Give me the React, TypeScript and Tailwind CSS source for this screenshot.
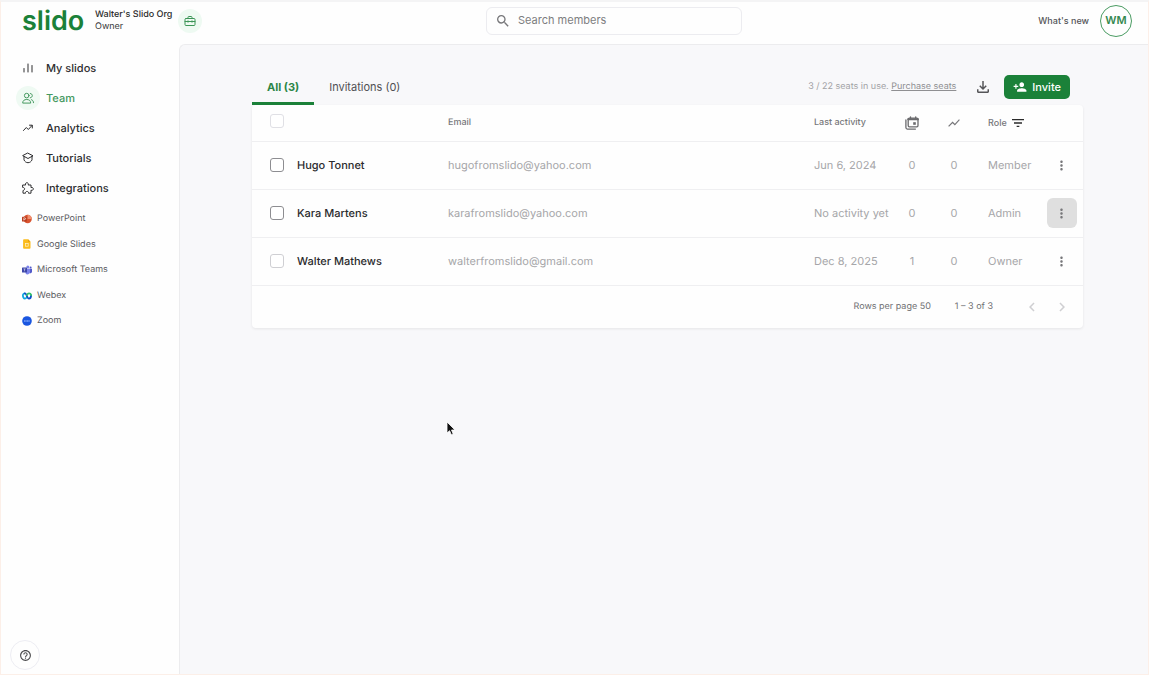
import type { ReactNode } from 'react'
import {
  MdChevronLeft,
  MdChevronRight,
  MdFilterList,
  MdHelpOutline,
  MdMoreVert,
  MdOutlineFileDownload,
  MdPersonAdd,
  MdSearch,
  MdShowChart,
} from 'react-icons/md'

interface Member {
  name: string
  email: string
  lastActivity: string
  slidos: number
  joined: number
  role: string
  menuOpen?: boolean
  locked?: boolean
}

const members: Member[] = [
  { name: 'Hugo Tonnet', email: 'hugofromslido@yahoo.com', lastActivity: 'Jun 6, 2024', slidos: 0, joined: 0, role: 'Member' },
  { name: 'Kara Martens', email: 'karafromslido@yahoo.com', lastActivity: 'No activity yet', slidos: 0, joined: 0, role: 'Admin', menuOpen: true },
  { name: 'Walter Mathews', email: 'walterfromslido@gmail.com', lastActivity: 'Dec 8, 2025', slidos: 1, joined: 0, role: 'Owner', locked: true },
]

const line = {
  fill: 'none',
  stroke: 'currentColor',
  strokeLinecap: 'round',
  strokeLinejoin: 'round',
} as const

const navItems: { label: string; icon: ReactNode; active?: boolean }[] = [
  {
    label: 'My slidos',
    icon: (
      <svg className="w-3 h-3" viewBox="0 0 12 12" {...line} strokeWidth="1">
        <path d="M2 6.500V10" />
        <path d="M6 2v8" />
        <path d="M10 3.500V10" />
      </svg>
    ),
  },
  {
    label: 'Team',
    active: true,
    icon: (
      <svg className="w-3 h-3" viewBox="0 0 12 12" {...line} strokeWidth="1">
        <circle cx="4.7" cy="3.6" r="2.3" />
        <path d="M.7 10.7c0-2 1.500-3.200 4-3.200s4 1.200 4 3.200z" />
        <path d="M8.300 1.500c2.800.2 2.800 4 0 4.300M9.500 7.700c1.300.4 2 1.500 2 3" />
      </svg>
    ),
  },
  {
    label: 'Analytics',
    icon: (
      <svg className="w-3 h-3" viewBox="0 0 12 12" {...line} strokeWidth="1">
        <path d="M1.500 8.500l2.800-3 2 2L10 3.500" />
        <path d="M7.500 3.200h2.800V6" />
      </svg>
    ),
  },
  {
    label: 'Tutorials',
    icon: (
      <svg className="w-3 h-3" viewBox="0 0 12 12" {...line} strokeWidth="1">
        <path d="M6 1.200l5 2.600-5 2.700-5-2.700z" />
        <path d="M2 4.500v3.300C2.600 9.500 4.200 10.700 6 10.700s3.400-1.200 4-2.900V4.500" />
      </svg>
    ),
  },
  {
    label: 'Integrations',
    icon: (
      <svg className="w-3 h-3" viewBox="0 0 12 12" {...line} strokeWidth="1">
        <path d="M1 3h2.600c-.5-1.300.2-2.300 1.300-2.300S6.700 1.700 6.200 3H9v2.600c1.300-.5 2.300.2 2.300 1.300S10.300 8.700 9 8.200v3H6.500c.2-1-.5-1.800-1.500-1.800s-1.700.8-1.500 1.800H1V8.500c1-.1 1.600-.8 1.600-1.600S2 5.500 1 5.400z" />
      </svg>
    ),
  },
]

const integrations: { label: string; icon: ReactNode }[] = [
  {
    label: 'PowerPoint',
    icon: (
      <svg className="w-[10px] h-[10px]" viewBox="0 0 10 10">
        <circle cx="5.600" cy="5" r="4.200" fill="#d9532f" />
        <path d="M5.600.8A4.200 4.200 0 0 1 9.800 5H5.600z" fill="#f0906f" />
        <rect x="0" y="2.700" width="4.800" height="4.800" rx=".6" fill="#b83b1d" />
        <path d="M1.800 6.500V3.800h.9a.8.8 0 0 1 0 1.700h-.9" fill="none" stroke="#fff" strokeWidth=".6" />
      </svg>
    ),
  },
  {
    label: 'Google Slides',
    icon: (
      <svg className="w-[10px] h-[10px]" viewBox="0 0 10 10">
        <path d="M2 .3h4L8.500 2.800v6a.9.9 0 0 1-.9.9H2a.9.9 0 0 1-.9-.9V1.200A.9.9 0 0 1 2 .3z" fill="#fbbc1c" />
        <path d="M6 .3l2.500 2.500H6z" fill="#e99f0c" />
        <rect x="3.400" y="4.600" width="2.800" height="2.600" fill="none" stroke="#fff3cf" strokeWidth=".7" />
      </svg>
    ),
  },
  {
    label: 'Microsoft Teams',
    icon: (
      <svg className="w-[10px] h-[10px]" viewBox="0 0 10 10">
        <circle cx="5.800" cy="1.900" r="1.500" fill="#7b83eb" />
        <circle cx="8.600" cy="2.400" r="1" fill="#5059c9" />
        <path d="M7.500 3.800H10v2.900a1.600 1.600 0 0 1-2.500 1.200z" fill="#5059c9" />
        <path d="M3.500 3.800h4.600v3a2.500 2.500 0 0 1-4.600 1.400z" fill="#7b83eb" />
        <rect x="0" y="2.500" width="5" height="5" rx=".6" fill="#3d46a8" />
        <path d="M1.400 3.900h2.200M2.500 3.900v2.400" stroke="#fff" strokeWidth=".5" />
      </svg>
    ),
  },
  {
    label: 'Webex',
    icon: (
      <svg className="w-[10px] h-[10px]" viewBox="0 0 10 10" fill="none" strokeWidth="1.800" strokeLinecap="round">
        <path d="M4.900 5.800C4.400 7.200 3.700 7.600 3 7.600 1.500 7.600.9 5.800.9 4.300.9 3 1.900 2.400 2.900 2.400" stroke="#12a8e0" />
        <path d="M2.900 2.400c2 0 2 5.200 4 5.200 1.500 0 2.200-1.800 2.200-3.300" stroke="#0b50c8" />
        <path d="M5 4.200c.5-1.200 1.100-1.800 2-1.800 1.100 0 1.900.7 2.100 1.600" stroke="#35c26b" />
      </svg>
    ),
  },
  {
    label: 'Zoom',
    icon: (
      <svg className="w-[10px] h-[10px]" viewBox="0 0 10 10">
        <circle cx="5" cy="5" r="4.800" fill="#1a56e0" />
        <path d="M2 5h6" stroke="#a9c6ff" strokeWidth="1.100" strokeDasharray="1.200 .3" />
      </svg>
    ),
  },
]

function CalendarStack() {
  return (
    <svg className="w-[14px] h-[14px]" viewBox="0 0 14 14" {...line} strokeWidth="1.300">
      <path d="M.9 4v7.600c0 .9.600 1.500 1.500 1.500h8" />
      <rect x="3.200" y="2.200" width="9.800" height="8.600" rx="1.200" />
      <path d="M3.200 3.200h9.800" strokeWidth="2" />
      <path d="M5.500.8v1.400M10.700.8v1.400" />
      <rect x="8.200" y="6.200" width="2.600" height="2.600" fill="currentColor" stroke="none" />
    </svg>
  )
}

function Header() {
  return (
    <header className="flex items-center h-[42px] shrink-0 pr-4 pb-[5px]">
      <div className="flex items-center w-[485px] shrink-0 pl-[21px]">
        <a href="#" className="w-[73px] text-[27px] leading-8 font-semibold text-[#1b8139]">slido</a>
        <div className="text-[9px] leading-3 text-[#3c3c3c]">
          <div className="font-medium text-[#2b2b2b]">Walter's Slido Org</div>
          <div>Owner</div>
        </div>
        <button aria-label="Organization" className="ml-[6px] w-6 h-6 rounded-full bg-[#eefaf2] text-[#3c9657] flex items-center justify-center">
          <svg className="w-3 h-3" viewBox="0 0 12 12" {...line} strokeWidth="1">
            <rect x="1" y="3.500" width="10" height="7" rx="1" />
            <path d="M4 3.500V2.200c0-.4.300-.7.700-.7h2.600c.4 0 .7.300.7.700v1.300M1 6.500h10M4 5.800v1.400M8 5.800v1.400" />
          </svg>
        </button>
      </div>
      <label className="flex items-center gap-[7px] w-[256px] h-7 px-2 rounded-md border border-[#ececf0] text-[#77777a]">
        <MdSearch className="w-4 h-4 shrink-0" />
        <input type="search" aria-label="Search members" placeholder="Search members" className="w-full min-w-0 text-[11px] outline-none placeholder:text-[#7d7d80]" />
      </label>
      <button className="ml-auto text-[9px] font-medium text-[#555558]">What's new</button>
      <button className="ml-[11px] w-8 h-8 rounded-full border border-[#4b9c63] text-[#34884f] text-[11px] font-semibold">WM</button>
    </header>
  )
}

function Sidebar() {
  return (
    <aside className="w-[178px] shrink-0 flex flex-col pl-[15px] pt-[9px] pb-1">
      <nav>
        <ul>
          {navItems.map((item) => (
            <li key={item.label}>
              <a href="#" className={`flex items-center gap-[6px] h-[30px] text-[11px] font-medium ${item.active ? 'text-[#459960]' : 'text-[#2d2d2f]'}`}>
                <span className={`w-6 h-6 rounded-full flex items-center justify-center ${item.active ? 'bg-[#effaf3]' : ''}`}>{item.icon}</span>
                {item.label}
              </a>
            </li>
          ))}
        </ul>
        <ul className="grid h-32 mt-[3px] pl-[6px]">
          {integrations.map((item) => (
            <li key={item.label} className="flex items-center">
              <a href="#" className="flex items-center gap-[5px] text-[9px] text-[#5b5b5e]">
                {item.icon}
                {item.label}
              </a>
            </li>
          ))}
        </ul>
      </nav>
      <button aria-label="Help" className="mt-auto -ml-[6px] w-[30px] h-[30px] rounded-full border border-[#ededf3] text-[#4a4a4c] flex items-center justify-center">
        <MdHelpOutline className="w-[13px] h-[13px]" />
      </button>
    </aside>
  )
}

function Checkbox({ label, tone }: { label: string; tone: string }) {
  return <input type="checkbox" aria-label={label} className={`appearance-none block w-[14px] h-[14px] rounded-[3px] border bg-white ${tone}`} />
}

function MembersTable() {
  return (
    <div className="bg-[#fefefe] rounded-sm shadow-[0_1px_3px_rgba(0,0,0,0.08)]">
      <table className="w-full table-fixed text-left text-[11px] text-[#a6a6a9]">
        <colgroup>
          <col className="w-[45px]" />
          <col className="w-[151px]" />
          <col />
          <col className="w-[77px]" />
          <col className="w-[42px]" />
          <col className="w-[42px]" />
          <col className="w-[65px]" />
          <col className="w-[43px]" />
        </colgroup>
        <thead>
          <tr className="h-9 border-b border-[#efeff1] text-[9px] text-[#77777a]">
            <th className="pl-[18px] pb-1"><Checkbox label="Select all members" tone="border-[#e0e0e5]" /></th>
            <th />
            <th className="font-medium">Email</th>
            <th className="font-medium">Last activity</th>
            <th><span className="flex justify-center text-[#6a6a6d]"><CalendarStack /></span></th>
            <th><MdShowChart className="w-[14px] h-[14px] mx-auto" /></th>
            <th className="font-medium pl-[13px]">
              <button className="flex items-center gap-[3px]">
                Role <MdFilterList className="w-4 h-4 text-[#2b2b2b]" />
              </button>
            </th>
            <th />
          </tr>
        </thead>
        <tbody>
          {members.map((m) => (
            <tr key={m.email} className="h-12 border-b border-[#efeff1]">
              <td className="pl-[18px]"><Checkbox label={`Select ${m.name}`} tone={m.locked ? 'border-[#cfcfd3]' : 'border-[#8d8d91]'} /></td>
              <td className="font-medium text-[#2b2b2d]">{m.name}</td>
              <td>{m.email}</td>
              <td className="whitespace-nowrap">{m.lastActivity}</td>
              <td className="text-center">{m.slidos}</td>
              <td className="text-center">{m.joined}</td>
              <td className="pl-[13px]">{m.role}</td>
              <td>
                <button aria-label={`Actions for ${m.name}`} className={`mx-auto w-[30px] h-[30px] rounded-md flex items-center justify-center text-[#77777a] ${m.menuOpen ? 'bg-[#dfdfdf]' : ''}`}>
                  <MdMoreVert className="w-[15px] h-[15px]" />
                </button>
              </td>
            </tr>
          ))}
        </tbody>
      </table>
      <div className="flex items-center justify-end h-[42px] pr-3 text-[9px] text-[#707073]">
        <span>Rows per page 50</span>
        <span className="ml-6 mr-[30px]">1 – 3 of 3</span>
        <button aria-label="Previous page" disabled className="text-[#cfcfd2]"><MdChevronLeft className="w-[18px] h-[18px]" /></button>
        <button aria-label="Next page" disabled className="ml-3 text-[#cfcfd2]"><MdChevronRight className="w-[18px] h-[18px]" /></button>
      </div>
    </div>
  )
}

export default function App() {
  return (
    <div className="flex flex-col min-h-screen bg-[#fefefe] border border-t-2 border-t-[#f4f4f5] border-[#fcefe8] font-['Inter','Liberation_Sans',sans-serif] [text-rendering:geometricPrecision]">
      <Header />
      <div className="flex flex-1">
        <Sidebar />
        <main className="flex-1 min-w-0 bg-[#f8f8fa] border-l border-t border-[#ececee] rounded-tl-md pl-[72px] pr-[65px] pt-6">
          <div className="flex items-stretch h-9 text-[11px]">
            <button className="px-[15px] pt-1 border-b-3 border-[#1b8139] rounded-t-sm font-bold text-[#2c8647]">All (3)</button>
            <button className="px-[15px] pt-1 border-b-3 border-transparent text-[#505053]">Invitations (0)</button>
            <div className="ml-auto pr-[13px] flex items-center text-[9px] text-[#a2a2a5]">
              <span>
                3 / 22 seats in use. <a href="#" className="underline text-[#8f8f92]">Purchase seats</a>
              </span>
              <button aria-label="Export members" className="ml-[18px] text-[#555558]">
                <MdOutlineFileDownload className="w-[18px] h-[18px]" />
              </button>
              <button className="ml-3 h-6 px-[9px] rounded-[5px] bg-[#1b8139] text-white text-[11px] font-medium flex items-center gap-[5px]">
                <MdPersonAdd className="w-[14px] h-[14px]" />
                Invite
              </button>
            </div>
          </div>
          <MembersTable />
        </main>
      </div>
      <svg className="absolute left-[446px] top-[421px] w-[10px] h-[15px]" viewBox="0 0 10 15">
        <path d="M1 1v11l2.600-2.300 1.700 4 1.900-.8-1.700-3.900H9z" fill="#111" stroke="#fff" strokeWidth=".8" />
      </svg>
    </div>
  )
}
